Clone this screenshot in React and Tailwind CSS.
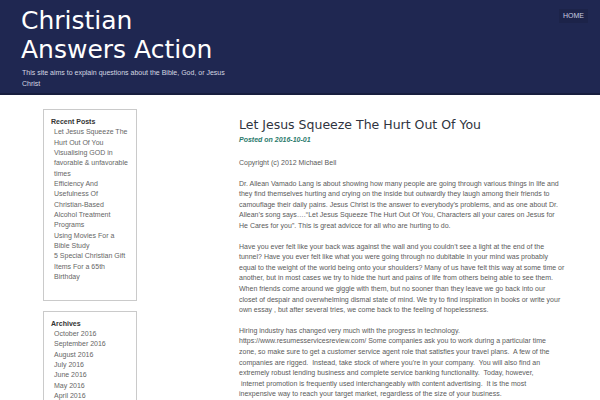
import React from "react";

const posts = [
  ["Let Jesus Squeeze The", "Hurt Out Of You"],
  ["Visualising GOD in", "favorable & unfavorable", "times"],
  ["Efficiency And", "Usefulness Of", "Christian-Based", "Alcohol Treatment", "Programs"],
  ["Using Movies For a", "Bible Study"],
  ["5 Special Christian Gift", "Items For a 65th", "Birthday"],
];

const archives = [
  ["October 2016"],
  ["September 2016"],
  ["August 2016"],
  ["July 2016"],
  ["June 2016"],
  ["May 2016"],
  ["April 2016"],
  ["March 2016"],
];

function Widget({ title, items }) {
  return (
    <div className="border border-[#cacaca] pl-[7px] pr-[4px] pt-[7px] pb-[17px] leading-[10.35px] text-[7px]">
      <div className="font-bold text-[#333]">{title}</div>
      <ul>
        {items.map((lines) => (
          <li key={lines.join(" ")} className="pl-[3px] text-[#666] whitespace-nowrap">
            {lines.map((l, i) => (
              <span key={i} className="block">{l}</span>
            ))}
          </li>
        ))}
      </ul>
    </div>
  );
}

const paras = [
  ["Copyright (c) 2012 Michael Bell"],
  [
    "Dr. Allean Vamado Lang is about showing how many people are going through various things in life and",
    "they find themselves hurting and crying on the inside but outwardly they laugh among their friends to",
    "camouflage their daily pains. Jesus Christ is the answer to everybody’s problems, and as one about Dr.",
    "Allean’s song says….“Let Jesus Squeeze The Hurt Out Of You, Characters all your cares on Jesus for",
    "He Cares for you”. This is great advicce for all who are hurting to do.",
  ],
  [
    "Have you ever felt like your back was against the wall and you couldn’t see a light at the end of the",
    "tunnel? Have you ever felt like what you were going through no dubitable in your mind was probably",
    "equal to the weight of the world being onto your shoulders? Many of us have felt this way at some time or",
    "another, but in most cases we try to hide the hurt and pains of life from others being able to see them.",
    "When friends come around we giggle with them, but no sooner than they leave we go back into our",
    "closet of despair and overwhelming dismal state of mind. We try to find inspiration in books or write your",
    "own essay , but after several tries, we come back to the feeling of hopelessness.",
  ],
  [
    "Hiring industry has changed very much with the progress in technology.",
    "https://www.resumesservicesreview.com/ Some companies ask you to work during a particular time",
    "zone, so make sure to get a customer service agent role that satisfies your travel plans.  A few of the",
    "companies are rigged.  Instead, take stock of where you’re in your company.  You will also find an",
    "extremely robust lending business and complete service banking functionality.  Today, however,",
    " internet promotion is frequently used interchangeably with content advertising.  It is the most",
    "inexpensive way to reach your target market, regardless of the size of your business.",
  ],
];

export default function App() {
  return (
    <div className="w-[600px] h-[400px] overflow-hidden bg-white" style={{ fontFamily: '"Liberation Sans", Arial, sans-serif' }}>
      <header className="h-[95px] bg-[#1f2751] border-b-2 border-[#171d3e] flex justify-between">
        <div className="pl-[21px] pt-[6px]">
          <div className="text-white text-[25px] leading-[29px]" style={{ fontFamily: '"DejaVu Sans", sans-serif' }}>
            Christian
            <br />
            Answers Action
          </div>
          <p className="mt-[4px] ml-[1px] w-[210px] text-[7px] leading-[10.6px] text-[#d4d7e2]">
            This site aims to explain questions about the Bible, God, or Jesus Christ
          </p>
        </div>
        <nav className="pt-[9px] pr-[12px]">
          <a className="block bg-[#1c2349] px-[4px] py-[2px] text-[7px] leading-[10px] text-[#c9cde0]">HOME</a>
        </nav>
      </header>
      <div className="flex pl-[43px] pt-[14px]">
        <aside className="w-[94px] shrink-0 flex flex-col gap-[10px]">
          <Widget title="Recent Posts" items={posts} />
          <Widget title="Archives" items={archives} />
        </aside>
        <main className="ml-[102px] w-[340px] pt-[8px] text-[7px] leading-[10.6px] text-[#5a5a5a]">
          <h1 className="text-[12.5px] leading-[16px] text-[#2f3440]" style={{ fontFamily: '"DejaVu Sans", sans-serif' }}>
            Let Jesus Squeeze The Hurt Out Of You
          </h1>
          <div className="mt-[2px] mb-[13px] text-[7px] leading-[10px] font-bold italic text-[#2b7a6c]">
            Posted on 2016-10-01
          </div>
          {paras.map((lines, pi) => (
            <p key={pi} className="mb-[10px] whitespace-pre">
              {lines.map((l, i) => (
                <span key={i} className="block">{l}</span>
              ))}
            </p>
          ))}
        </main>
      </div>
    </div>
  );
}
